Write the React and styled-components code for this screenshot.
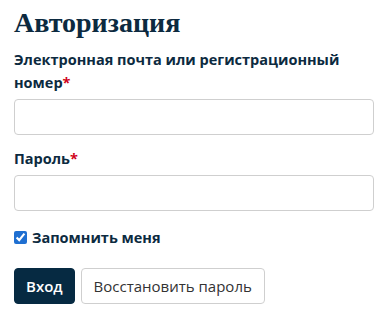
import React from "react";
import styled, { createGlobalStyle } from "styled-components";

const Global = createGlobalStyle`
  body {
    margin: 0;
    background: #fff;
    font-family: "Open Sans", "DejaVu Sans", sans-serif;
    color: #0c2a40;
  }
`;

const Form = styled.form`
  padding: 6px 14px 0 14px;
  width: 360px;
`;

const Title = styled.h1`
  margin: 0 0 8px 0;
  font-family: "Liberation Serif", "DejaVu Serif", serif;
  font-weight: 700;
  font-size: 28px;
  line-height: 34px;
  color: #0c2a40;
`;

const Field = styled.div`
  margin-bottom: 12px;
`;

const Label = styled.label`
  display: block;
  font-weight: 700;
  font-size: 14.5px;
  line-height: 23px;
  margin-bottom: 5px;
  color: #0c2a40;
`;

const Star = styled.span`
  color: #d0021b;
`;

const Input = styled.input`
  display: block;
  box-sizing: border-box;
  width: 360px;
  height: 36px;
  border: 1px solid #cfcfcf;
  border-radius: 4px;
  padding: 0 10px;
  font: inherit;
`;

const Check = styled.label`
  display: flex;
  align-items: center;
  gap: 5px;
  font-weight: 700;
  font-size: 14.5px;
  margin-top: 17px;
  margin-bottom: 21px;
  input {
    margin: 0;
    width: 13px;
    height: 13px;
    accent-color: #1f6fd1;
  }
`;

const Buttons = styled.div`
  display: flex;
  gap: 6px;
`;

const Button = styled.button`
  height: 36px;
  box-sizing: border-box;
  padding: 0 ${(p) => (p.$primary ? "11px" : "12px")};
  border-radius: 4px;
  font-family: "Open Sans", "DejaVu Sans", sans-serif;
  font-size: 15px;
  border: 1px solid ${(p) => (p.$primary ? "#062a42" : "#cfcfcf")};
  background: ${(p) => (p.$primary ? "#062a42" : "#fff")};
  color: ${(p) => (p.$primary ? "#fff" : "#333")};
  font-weight: ${(p) => (p.$primary ? 600 : 400)};
`;

export default function App() {
  return (
    <>
      <Global />
      <Form onSubmit={(e) => e.preventDefault()}>
        <Title>Авторизация</Title>
        <Field>
          <Label>
            Электронная почта или регистрационный номер<Star>*</Star>
          </Label>
          <Input type="text" />
        </Field>
        <Field>
          <Label>
            Пароль<Star>*</Star>
          </Label>
          <Input type="password" />
        </Field>
        <Check>
          <input type="checkbox" defaultChecked />
          Запомнить меня
        </Check>
        <Buttons>
          <Button $primary>Вход</Button>
          <Button type="button">Восстановить пароль</Button>
        </Buttons>
      </Form>
    </>
  );
}
